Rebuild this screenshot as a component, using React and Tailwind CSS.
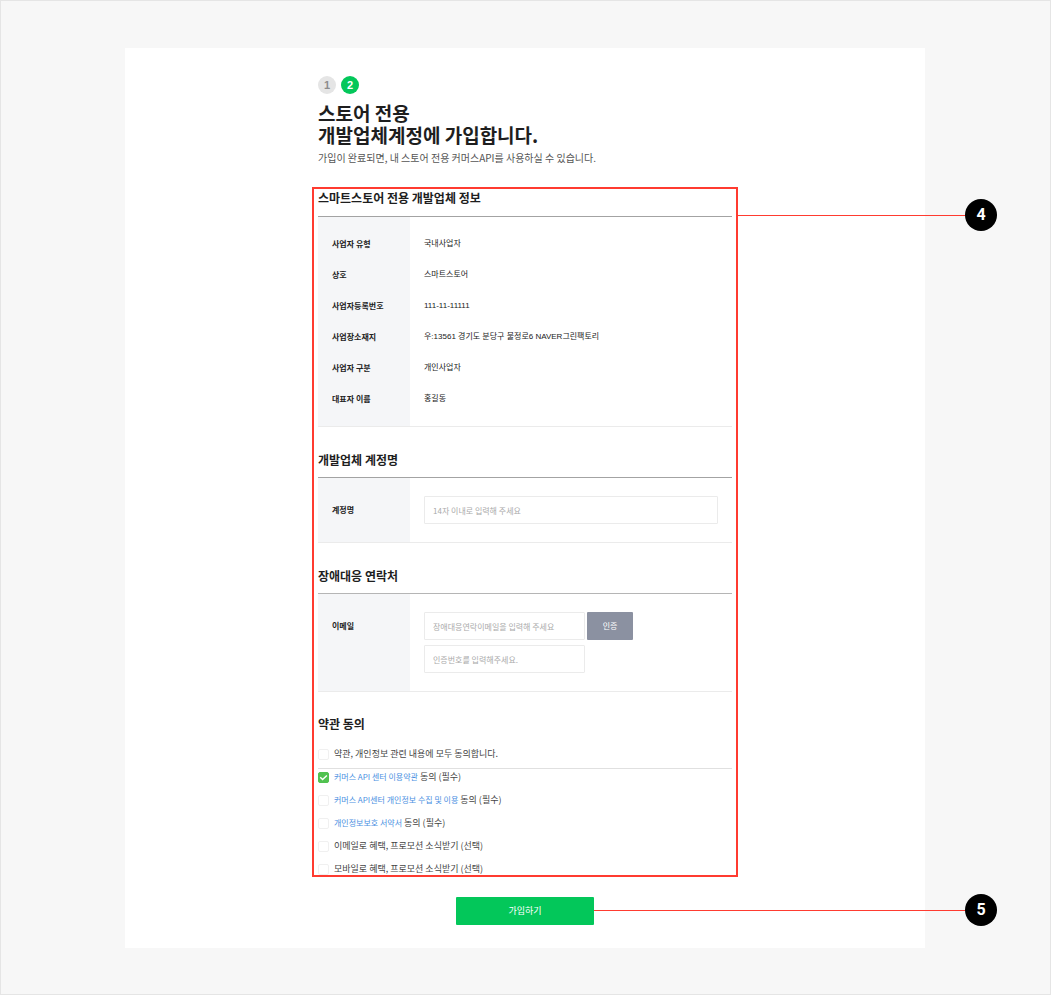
import { useState } from "react";

const businessInfo = [
   { label: "사업자 유형", value: "국내사업자" },
   { label: "상호", value: "스마트스토어" },
   { label: "사업자등록번호", value: "111-11-11111" },
   { label: "사업장소재지", value: "우:13561 경기도 분당구 불정로6 NAVER그린팩토리" },
   { label: "사업자 구분", value: "개인사업자" },
   { label: "대표자 이름", value: "홍길동" },
];

const terms = [
   { id: "service", link: "커머스 API 센터 이용약관", text: " 동의 (필수)" },
   { id: "privacy", link: "커머스 API센터 개인정보 수집 및 이용", text: " 동의 (필수)" },
   { id: "pledge", link: "개인정보보호 서약서", text: " 동의 (필수)" },
   { id: "email-news", text: "이메일로 혜택, 프로모션 소식받기 (선택)" },
   { id: "mobile-news", text: "모바일로 혜택, 프로모션 소식받기 (선택)" },
];

const inputClass =
   "block h-7 w-full rounded-[1px] border border-[#ebebeb] bg-white px-2 text-[8px] text-[#222] placeholder:text-[#aaa] outline-none focus:border-[#03c75a]";

function SectionTitle({ children }) {
   return <h2 className="text-[12px] leading-[18px] font-bold text-[#1e1e1e]">{children}</h2>;
}

function Checkbox({ id, checked, onChange }) {
   return (
      <span className="relative block h-[11px] w-[11px] shrink-0">
         <input
            id={id}
            type="checkbox"
            checked={checked}
            onChange={onChange}
            className="block h-[11px] w-[11px] appearance-none rounded-[2px] border border-[#f0f0f0] bg-white checked:border-[#51c250] checked:bg-[#51c250]"
         />
         {checked && (
            <svg
               viewBox="0 0 11 11"
               className="pointer-events-none absolute inset-0 h-[11px] w-[11px]"
               fill="none"
               stroke="#fff"
               strokeWidth="1.4"
            >
               <path d="M2.2 5.2 4.6 7.6 8.9 3.6" />
            </svg>
         )}
      </span>
   );
}

// Numbered marker with a leader line that starts at the right edge of its parent
function Marker({ number, className, lineClass }) {
   return (
      <div className={`absolute left-full flex items-start ${className}`}>
         <span className={`mt-4 h-px bg-[#ff3b30] ${lineClass}`} />
         <span className="flex h-8 w-8 shrink-0 items-center justify-center rounded-full bg-black font-['Roboto','Noto_Sans_CJK_KR',sans-serif] text-[16px] leading-none font-bold text-white">
            {number}
         </span>
      </div>
   );
}

function App() {
   const [accountName, setAccountName] = useState("");
   const [email, setEmail] = useState("");
   const [code, setCode] = useState("");
   const [agreed, setAgreed] = useState({ service: true });

   const allAgreed = terms.every((term) => agreed[term.id]);

   const toggleAll = () => {
      const next = {};
      terms.forEach((term) => {
         next[term.id] = !allAgreed;
      });
      setAgreed(next);
   };

   const toggle = (id) => setAgreed({ ...agreed, [id]: !agreed[id] });

   return (
      <div className="min-h-screen border border-[#e5e5e5] bg-[#f7f7f7] pt-[47px] pr-[125px] pb-[46px] pl-[124px] font-['Noto_Sans_CJK_KR',sans-serif]">
         <main className="bg-white pt-7 pb-[23px]">
            <form className="mx-auto max-w-[426px]" onSubmit={(e) => e.preventDefault()}>
               <header className="px-[6px]">
                  <ol className="flex gap-[5px] font-['Liberation_Sans',sans-serif] text-[11px] font-bold">
                     <li className="flex h-[18px] w-[18px] items-center justify-center rounded-full bg-[#e5e5e5] text-[#8c8c8c]">
                        1
                     </li>
                     <li className="flex h-[18px] w-[18px] items-center justify-center rounded-full bg-[#03c75a] text-white">
                        2
                     </li>
                  </ol>
                  <h1 className="mt-2 text-[19px] leading-[22px] font-bold text-[#1e1e1e]">
                     스토어 전용
                     <br />
                     개발업체계정에 가입합니다.
                  </h1>
                  <p className="mt-1 text-[10px] leading-4 text-[#555]">
                     가입이 완료되면, 내 스토어 전용 커머스API를 사용하실 수 있습니다.
                  </p>
               </header>

               <div className="relative mt-[21px] border-2 border-[#ff3b30] px-1">
                  {/* the marker starts inside the 2px border, so its line covers it too */}
                  <Marker number={4} className="top-[10px]" lineClass="w-[229px]" />

                  <section>
                     <SectionTitle>스마트스토어 전용 개발업체 정보</SectionTitle>
                     <div className="mt-[9px] border-t border-b border-t-[#a3a3a3] border-b-[#ebebeb]">
                        <table className="w-full text-left text-[8px] leading-[15px] text-[#222]">
                           <tbody>
                              {businessInfo.map((row) => (
                                 <tr key={row.label} className="group">
                                    <th
                                       scope="row"
                                       className="w-[92px] bg-[#f5f6f8] py-2 pl-[14px] font-bold group-first:pt-[19px] group-last:pb-5"
                                    >
                                       {row.label}
                                    </th>
                                    <td className="py-2 pl-[14px] font-['Liberation_Sans','Noto_Sans_CJK_KR',sans-serif] group-first:pt-[19px] group-last:pb-5">
                                       {row.value}
                                    </td>
                                 </tr>
                              ))}
                           </tbody>
                        </table>
                     </div>
                  </section>

                  <section className="mt-6">
                     <SectionTitle>개발업체 계정명</SectionTitle>
                     <div className="mt-2 flex border-t border-b border-t-[#a3a3a3] border-b-[#ebebeb]">
                        <label
                           htmlFor="accountName"
                           className="w-[92px] shrink-0 bg-[#f5f6f8] py-[18px] pl-[14px] text-[8px] leading-7 font-bold text-[#222]"
                        >
                           계정명
                        </label>
                        <div className="flex-1 px-[14px] py-[18px]">
                           <input
                              id="accountName"
                              type="text"
                              maxLength={14}
                              className={inputClass}
                              placeholder="14자 이내로 입력해 주세요"
                              value={accountName}
                              onChange={(e) => setAccountName(e.target.value)}
                           />
                        </div>
                     </div>
                  </section>

                  <section className="mt-6">
                     <SectionTitle>장애대응 연락처</SectionTitle>
                     <div className="mt-2 flex border-t border-b border-t-[#b5b5b5] border-b-[#ebebeb]">
                        <label
                           htmlFor="email"
                           className="w-[92px] shrink-0 bg-[#f5f6f8] py-[18px] pl-[14px] text-[8px] leading-7 font-bold text-[#222]"
                        >
                           이메일
                        </label>
                        <div className="flex flex-1 flex-col gap-[5px] px-[14px] py-[18px]">
                           <div className="flex gap-[2px]">
                              <div className="w-[161px]">
                                 <input
                                    id="email"
                                    type="email"
                                    className={inputClass}
                                    placeholder="장애대응연락이메일을 입력해 주세요"
                                    value={email}
                                    onChange={(e) => setEmail(e.target.value)}
                                 />
                              </div>
                              <button
                                 type="button"
                                 className="h-7 w-[46px] rounded-[1px] bg-[#8b91a1] text-[8px] text-white"
                              >
                                 인증
                              </button>
                           </div>
                           <div className="w-[161px]">
                              <input
                                 type="text"
                                 aria-label="인증번호"
                                 className={inputClass}
                                 placeholder="인증번호를 입력해주세요."
                                 value={code}
                                 onChange={(e) => setCode(e.target.value)}
                              />
                           </div>
                        </div>
                     </div>
                  </section>

                  <section className="mt-[23px] text-[9px] leading-3 text-[#444]">
                     <SectionTitle>약관 동의</SectionTitle>
                     <div className="mt-[15px] flex items-center gap-[5px] border-b border-[#e0e0e0] pb-2">
                        <Checkbox id="all" checked={allAgreed} onChange={toggleAll} />
                        <label htmlFor="all">약관, 개인정보 관련 내용에 모두 동의합니다.</label>
                     </div>
                     <ul className="mt-[2px] flex flex-col gap-[11px]">
                        {terms.map((term) => (
                           <li key={term.id} className="flex h-3 items-center gap-[5px]">
                              <Checkbox
                                 id={term.id}
                                 checked={!!agreed[term.id]}
                                 onChange={() => toggle(term.id)}
                              />
                              <label htmlFor={term.id}>
                                 {term.link && (
                                    <a href="#terms" className="text-[8px] text-[#4a90e2]">
                                       {term.link}
                                    </a>
                                 )}
                                 {term.text}
                              </label>
                           </li>
                        ))}
                     </ul>
                  </section>
               </div>

               <div className="relative mx-auto mt-5 w-[138px]">
                  <button
                     type="submit"
                     className="block h-7 w-full rounded-[1px] bg-[#03c75a] text-[9px] text-white"
                  >
                     가입하기
                  </button>
                  <Marker number={5} className="-top-[3px]" lineClass="w-[371px]" />
               </div>
            </form>
         </main>
      </div>
   );
}

export default App;
